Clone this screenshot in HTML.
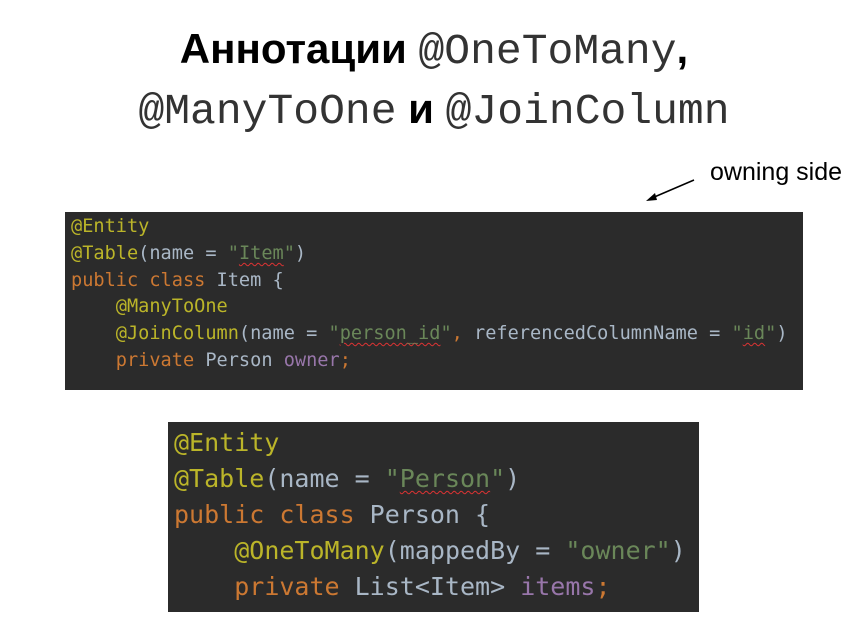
<!DOCTYPE html>
<html><head><meta charset="utf-8"><style>
body{margin:0;width:868px;height:633px;background:#fff;position:relative;overflow:hidden;font-family:"Liberation Sans",sans-serif}
.t{position:absolute;left:0;width:868px;text-align:center;color:#000;font-size:42px;font-weight:bold;white-space:nowrap}
.t .m{font-family:"Liberation Mono",monospace;font-weight:normal;font-size:43px;color:#333}
.code{position:absolute;background:#2b2b2b;font-family:"DejaVu Sans Mono","Liberation Mono",monospace;white-space:pre;color:#a9b7c6}
.a{color:#bbb529}.k{color:#cc7832}.s{color:#6a8759}.p{color:#9876aa}
.w{text-decoration:underline wavy #d33;text-underline-offset:3px;text-decoration-thickness:1px}
</style></head><body>
<div class="t" style="top:25px">Аннотации <span class="m">@OneToMany</span>,</div>
<div class="t" style="top:85px"><span class="m">@ManyToOne</span> и <span class="m">@JoinColumn</span></div>
<div style="position:absolute;left:710px;top:158px;font-size:25px;color:#000">owning side</div>
<svg style="position:absolute;left:0;top:0" width="868" height="633"><line x1="694" y1="180" x2="652" y2="198" stroke="#000" stroke-width="1.5"/><polygon points="646,201 655,193 657,200" fill="#000"/></svg>
<div class="code" style="left:65px;top:212px;width:738px;height:178px;font-size:18.6px;line-height:26.8px;padding:2px 0 0 6px;box-sizing:border-box"><span class="a">@Entity</span>
<span class="a">@Table</span>(name = <span class="s">"<span class="w">Item</span>"</span>)
<span class="k">public class</span> Item {
    <span class="a">@ManyToOne</span>
    <span class="a">@JoinColumn</span>(name = <span class="s">"<span class="w">person_id</span>"</span><span class="k">,</span> referencedColumnName = <span class="s">"<span class="w">id</span>"</span>)
    <span class="k">private</span> Person <span class="p">owner</span><span class="k">;</span></div>
<div class="code" style="left:168px;top:422px;width:531px;height:190px;font-size:25px;line-height:36px;padding:3px 0 0 6px;box-sizing:border-box"><span class="a">@Entity</span>
<span class="a">@Table</span>(name = <span class="s">"<span class="w">Person</span>"</span>)
<span class="k">public class</span> Person {
    <span class="a">@OneToMany</span>(mappedBy = <span class="s">"owner"</span>)
    <span class="k">private</span> List&lt;Item&gt; <span class="p">items</span><span class="k">;</span></div>
</body></html>
